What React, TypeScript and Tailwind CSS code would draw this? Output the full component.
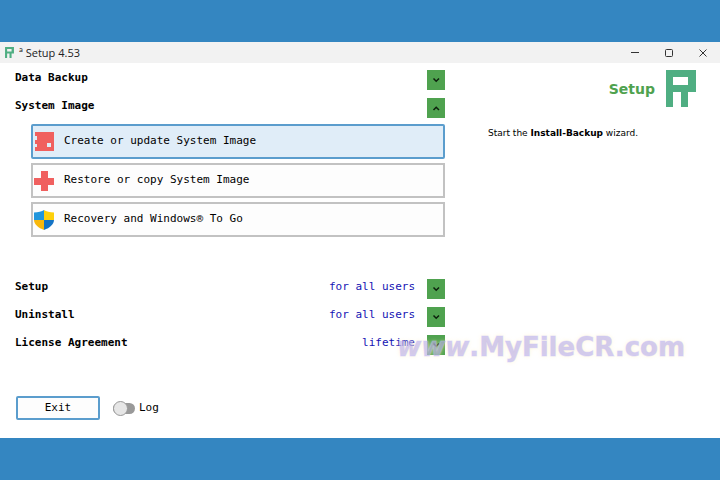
import { useState, type ReactNode } from 'react'

const LogoMark = ({ className }: { className?: string }) => (
  <svg viewBox="0 0 30 37" className={className} fill="#4fae82" aria-hidden="true">
    <path
      fillRule="evenodd"
      d="M0 0h30v22h-8v15h-7V22H7v15H0zM7 7v8h15V7z"
    />
  </svg>
)

const PuzzleIcon = () => (
  <svg viewBox="0 0 20 20" className="size-5" fill="#f0605f" aria-hidden="true">
    <path fillRule="evenodd" d="M1 0h19v19H1v-4h2v-3H1V8h2V4H1zM13 11v4h4v-4z" />
  </svg>
)

const PlusIcon = () => (
  <svg viewBox="0 0 20 20" className="size-5" fill="#f0605f" aria-hidden="true">
    <path d="M7 0h7v7h6v7h-6v6H7v-6H0V7h7z" />
  </svg>
)

const ShieldIcon = () => (
  <svg viewBox="0 0 20 20" className="size-5" aria-hidden="true">
    <path fill="#2196dc" d="M10 0C8 1.600 4 2.500 0 2.500V10h10z" />
    <path fill="#fdd00b" d="M10 0c2 1.600 6 2.500 10 2.500V10H10z" />
    <path fill="#f9b80c" d="M0 10c.3 4.500 4 7.800 10 10V10z" />
    <path fill="#1473c4" d="M20 10c-.3 4.500-4 7.800-10 10V10z" />
  </svg>
)

const ExpandButton = ({ label, open, onClick }: { label: string; open: boolean; onClick: () => void }) => (
  <button
    type="button"
    aria-label={label}
    aria-expanded={open}
    onClick={onClick}
    className="flex h-5 w-[18px] shrink-0 items-center justify-center bg-[#4fa24f]"
  >
    <svg viewBox="0 0 8 6" className="h-[6px] w-2" fill="none" stroke="#0c1f0c" strokeWidth="1.5" aria-hidden="true">
      <path d={open ? 'M1.500 5l2.700-2.700L7 5' : 'M1.500 1.500l2.700 2.700L7 1.500'} />
    </svg>
  </button>
)

const SectionRow = ({ title, value, defaultOpen = false, children }: {
  title: string
  value?: string
  defaultOpen?: boolean
  children?: ReactNode
}) => {
  const [open, setOpen] = useState(defaultOpen)

  return (
    <section>
      <div className={`flex items-start gap-3 ${open ? 'h-[26px]' : 'h-7'}`}>
        <h2 className="flex-1 leading-4 font-bold">{title}</h2>
        {value && <span className="leading-4 text-[#1414b4]">{value}</span>}
        <ExpandButton label={title} open={open} onClick={() => setOpen(!open)} />
      </div>
      {open && children}
    </section>
  )
}

const actions = [
  { label: 'Create or update System Image', icon: <PuzzleIcon /> },
  { label: 'Restore or copy System Image', icon: <PlusIcon /> },
  { label: 'Recovery and Windows® To Go', icon: <ShieldIcon /> },
]

const TitleBar = () => (
  <header className="flex h-[21px] items-center bg-[#f2f2f2] pr-3 pl-[5px]">
    <LogoMark className="mr-[5px] h-[11px] w-[9px]" />
    <h1 className="flex-1 font-['Open_Sans',sans-serif] text-[11px] leading-4 text-[#222]">ª Setup 4.53</h1>
    <div className="flex gap-6">
      <button type="button" aria-label="Minimize">
        <svg viewBox="0 0 10 10" className="size-[10px]" stroke="#333" fill="none">
          <path d="M1 4.500h8" />
        </svg>
      </button>
      <button type="button" aria-label="Maximize">
        <svg viewBox="0 0 10 10" className="size-[10px]" stroke="#333" fill="none">
          <rect x="1.500" y="1.500" width="7" height="7" rx="1" />
        </svg>
      </button>
      <button type="button" aria-label="Close">
        <svg viewBox="0 0 10 10" className="size-[10px]" stroke="#333" fill="none">
          <path d="M1.500 1.500l7 7M8.500 1.500l-7 7" />
        </svg>
      </button>
    </div>
  </header>
)

export default function App() {
  const [selected, setSelected] = useState(0)

  return (
    <div className="flex min-h-screen flex-col bg-[#3486c1] py-[42px]">
      <main className="relative flex flex-1 flex-col bg-white">
        <TitleBar />
        <div className="grid flex-1 grid-cols-[445fr_275fr]">
          <div className="flex flex-col pt-[7px] pl-[15px] font-['DejaVu_Sans_Mono',monospace] text-[11px] text-black">
            <SectionRow title="Data Backup" />
            <SectionRow title="System Image" defaultOpen>
              <div className="flex flex-col gap-1 pl-4">
                {actions.map((action, i) => (
                  <button
                    key={action.label}
                    type="button"
                    onClick={() => setSelected(i)}
                    className={`flex h-[35px] items-center gap-[10px] border-2 pl-px text-left ${
                      i === selected ? 'rounded-xs border-[#5b9dcd] bg-[#e0edf8]' : 'border-[#c2c2c2] bg-[#fdfdfd]'
                    }`}
                  >
                    {action.icon}
                    {action.label}
                  </button>
                ))}
              </div>
            </SectionRow>

            <div className="mt-[42px]">
              <SectionRow title="Setup" value="for all users" />
              <SectionRow title="Uninstall" value="for all users" />
              <SectionRow title="License Agreement" value="lifetime" />
            </div>

            <div className="mt-[33px] flex items-center pl-px">
              <button type="button" className="h-6 w-[84px] rounded-xs border-2 border-[#5b9dcd] bg-[#fdfdfd]">
                Exit
              </button>
              <label className="ml-[13px] flex items-center gap-1">
                <input type="checkbox" role="switch" className="peer sr-only" />
                <span className="flex h-[11px] w-[22px] items-center rounded-full bg-[#999] peer-checked:justify-end peer-checked:bg-[#4fa24f]">
                  <span className="size-[15px] shrink-0 rounded-full border border-[#999] bg-[#e6e6e6]" />
                </span>
                Log
              </label>
            </div>
          </div>

          <aside className="pt-[7px] pr-6 pl-[43px] font-['DejaVu_Sans',sans-serif]">
            <div className="flex items-center justify-end gap-[11px]">
              <h2 className="text-[14px] leading-5 font-bold text-[#4fa24f]">Setup</h2>
              <LogoMark className="h-[37px] w-[30px]" />
            </div>
            <p className="mt-5 text-[9px] leading-3 text-black">
              Start the <b>Install-Backup</b> wizard.
            </p>
          </aside>
        </div>
        <div className="pointer-events-none absolute right-[35px] bottom-[75px] font-['DejaVu_Sans',sans-serif] text-[26px] leading-8 font-bold text-[#a79df0]/50 [-webkit-text-stroke:1px_#c9c2f566] [text-shadow:0_0_4px_#ffefc0a0]">
          <i>www</i>.MyFileCR.com
        </div>
      </main>
    </div>
  )
}
